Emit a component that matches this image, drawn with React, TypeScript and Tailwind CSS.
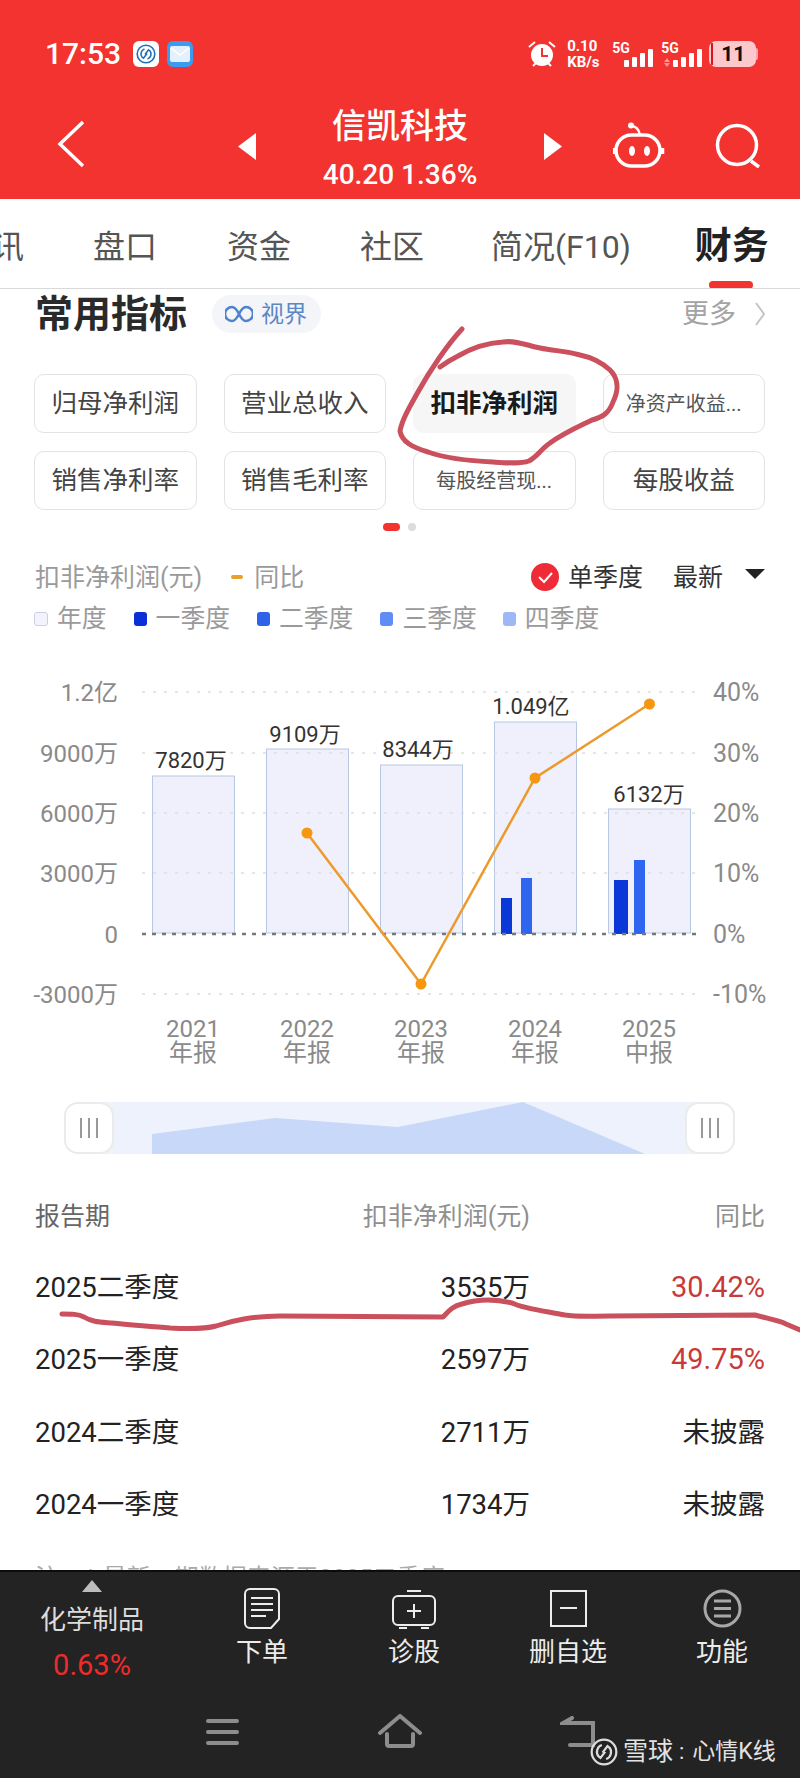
import React from 'react';

const chips = [
  { label: '归母净利润' },
  { label: '营业总收入' },
  { label: '扣非净利润', active: true },
  { label: '净资产收益...', small: true },
  { label: '销售净利率' },
  { label: '销售毛利率' },
  { label: '每股经营现...', small: true },
  { label: '每股收益' },
];

const legend = [
  { label: '一季度', color: 'bg-[#0a2fd6]', cls: 'ml-[27px]' },
  { label: '二季度', color: 'bg-[#2f62e8]', cls: 'ml-[27px]' },
  { label: '三季度', color: 'bg-[#5f8df5]', cls: 'ml-[27px]' },
  { label: '四季度', color: 'bg-[#9db8f5]', cls: 'ml-[26px]' },
];

const rows = [
  { period: '2025二季度', value: '3535万', yoy: '30.42%', up: true },
  { period: '2025一季度', value: '2597万', yoy: '49.75%', up: true },
  { period: '2024二季度', value: '2711万', yoy: '未披露' },
  { period: '2024一季度', value: '1734万', yoy: '未披露' },
];

const grid = [692, 753, 813, 873, 994];
const leftAxis = [
  ['1.2亿', 692],
  ['9000万', 753],
  ['6000万', 813],
  ['3000万', 873],
  ['0', 934],
  ['-3000万', 994],
] as const;
const rightAxis = [
  ['40%', 692],
  ['30%', 753],
  ['20%', 813],
  ['10%', 873],
  ['0%', 934],
  ['-10%', 994],
] as const;
const bars = [
  { x: 152, top: 776, label: '7820万', lx: 191, ly: 760, year: '2021', kind: '年报' },
  { x: 266, top: 749, label: '9109万', lx: 305, ly: 734, year: '2022', kind: '年报' },
  { x: 380, top: 765, label: '8344万', lx: 418, ly: 749, year: '2023', kind: '年报' },
  { x: 494, top: 722, label: '1.049亿', lx: 531, ly: 706, year: '2024', kind: '年报' },
  { x: 608, top: 809, label: '6132万', lx: 649, ly: 794, year: '2025', kind: '中报' },
];
const quarters = [
  { x: 501, w: 11, top: 898, fill: '#0a37d8' },
  { x: 521, w: 11, top: 878, fill: '#2f66f0' },
  { x: 614, w: 14, top: 880, fill: '#0a37d8' },
  { x: 634, w: 11, top: 860, fill: '#2f66f0' },
];
const line = [
  [307, 833],
  [421, 984],
  [535, 778],
  [649.5, 704],
];

const Signal = ({ arrows }: { arrows?: boolean }) => (
  <svg width="40" height="28" viewBox="0 0 40 28" className="fill-white">
    {arrows && <path d="M5 18l3 4H2zM5 27l3-4H2z" className="fill-[#f59a9a]" />}
    <rect x="11" y="20" width="5" height="7" rx="1" />
    <rect x="19" y="17" width="5" height="10" rx="1" />
    <rect x="27" y="13" width="5" height="14" rx="1" />
    <rect x="35" y="9" width="5" height="18" rx="1" />
  </svg>
);

const Xueqiu = ({ cls }: { cls: string }) => (
  <svg width="20" height="20" viewBox="0 0 20 20" fill="none" className={cls}>
    <circle cx="10" cy="10" r="8.800" />
    <path d="M8.500 5C5 6 4 10.500 6 13l1.500 1.200L11 9.500M11.500 15C15 14 16 9.500 14 7l-1.500-1.200L9 10.500" />
  </svg>
);

const StatusBar = () => (
  <div className="flex h-[28px] items-center pl-[45px]">
    <span className="text-[30px] font-medium leading-none text-white">17:53</span>
    <div className="ml-[12px] flex h-[26px] w-[26px] items-center justify-center rounded-[6px] bg-white">
      <Xueqiu cls="stroke-[#1f6fb5] stroke-[1.6]" />
    </div>
    <div className="ml-[8px] flex h-[26px] w-[26px] items-center justify-center rounded-[6px] bg-[#3b9bf0]">
      <svg width="20" height="16" viewBox="0 0 20 16">
        <rect width="20" height="16" rx="2" className="fill-[#e4f1fd]" />
        <path d="M1 2l9 7 9-7" fill="none" className="stroke-white stroke-[1.5]" />
      </svg>
    </div>
    <svg width="28" height="28" viewBox="0 0 28 28" className="ml-[335px]">
      <circle cx="14" cy="15" r="11" className="fill-white" />
      <path d="M14 8v8h6" fill="none" className="stroke-[#f23330] stroke-2" />
      <path d="M1 7l6-5M27 7l-6-5M5 26l3-3M23 26l-3-3" fill="none" className="stroke-white stroke-2" />
    </svg>
    <div className="ml-[11px] flex w-[34px] flex-col text-[15px] font-bold leading-[16px] text-white">
      <span>0.10</span>
      <span>KB/s</span>
    </div>
    <div className="relative ml-[11px] h-[28px] w-[41px]">
      <span className="absolute left-0 top-[1px] text-[14px] font-bold leading-none text-white">5G</span>
      <div className="absolute right-0 top-0"><Signal /></div>
    </div>
    <div className="relative ml-[8px] h-[28px] w-[41px]">
      <span className="absolute left-0 top-[1px] text-[14px] font-bold leading-none text-white">5G</span>
      <div className="absolute right-0 top-0"><Signal arrows /></div>
    </div>
    <div className="ml-[7px] flex h-[26px] w-[47px] items-center rounded-[7px] bg-[#fbc9cd] pl-[2px] text-[21px] font-bold leading-none text-[#111]">
      <span className="h-[22px] w-[2px] bg-[#d8141c]" />
      <span className="ml-[8px]">11</span>
    </div>
    <div className="h-[12px] w-[2px] rounded-r bg-[#f7a7ac]" />
  </div>
);

const NavBar = () => (
  <div className="mt-[32px] flex h-[99px] items-start">
    <svg width="30" height="48" viewBox="0 0 30 48" fill="none" className="ml-[56px] mt-[20px] stroke-white stroke-[3.5]">
      <path d="M27 2L4 24l23 22" />
    </svg>
    <svg width="18" height="27" viewBox="0 0 18 27" className="ml-[152px] mt-[33px] fill-white">
      <path d="M18 0v27L0 13.5z" />
    </svg>
    <div className="flex w-[288px] flex-col items-center text-white">
      <span className="mt-[6px] text-[34px] font-medium leading-[40px]">信凯科技</span>
      <span className="mt-[14px] text-[28px] font-medium leading-[30px]">40.20 1.36%</span>
    </div>
    <svg width="18" height="27" viewBox="0 0 18 27" className="mt-[33px] fill-white">
      <path d="M0 0v27l18-13.500z" />
    </svg>
    <svg width="52" height="48" viewBox="0 0 52 48" fill="none" className="ml-[51px] mt-[22px] stroke-white stroke-[3.500]">
      <rect x="3" y="13" width="44" height="31" rx="15.500" />
      <path d="M1 26v6M49.500 26v6" />
      <path d="M18 4c5 0 8 4 9 9" className="stroke-[2.500]" />
      <circle cx="18" cy="3.500" r="3" className="fill-white stroke-0" />
      <ellipse cx="19" cy="29" rx="3" ry="5" className="fill-white stroke-0" />
      <ellipse cx="34" cy="29" rx="3" ry="5" className="fill-white stroke-0" />
    </svg>
    <svg width="48" height="46" viewBox="0 0 48 46" fill="none" className="ml-[49px] mt-[22px] stroke-white stroke-[3.500]">
      <circle cx="23" cy="23" r="19.500" />
      <path d="M37 39l8 6" />
    </svg>
  </div>
);

const Tabs = () => (
  <div className="relative h-[90px] overflow-hidden border-b border-[#d9d9d9] bg-white">
    <div className="flex h-[89px] items-center whitespace-nowrap pt-[6px] text-[32px] leading-none text-[#555]">
      <span className="ml-[-8px]">讯</span>
      <span className="ml-[69px]">盘口</span>
      <span className="ml-[70px]">资金</span>
      <span className="ml-[69px]">社区</span>
      <span className="ml-[67px]">简况(F10)</span>
      <span className="relative ml-[64px] text-[37px] font-semibold text-[#222]">
        财务
        <span className="absolute left-[14px] top-[53px] h-[8px] w-[44px] rounded-full bg-[#f23330]" />
      </span>
    </div>
  </div>
);

const Chart = () => (
  <svg width="800" height="420" viewBox="0 660 800 420" className="mt-[26px] block">
    {bars.map((b) => (
      <rect key={b.x} x={b.x + 0.5} y={b.top} width="82" height={933 - b.top} className="fill-[#eff0fc] stroke-[#b8c8e2]" />
    ))}
    {grid.map((y) => (
      <line key={y} x1="142" x2="701" y1={y} y2={y} strokeDasharray="3 8" className="stroke-[#dedede] stroke-[1.5]" />
    ))}
    {quarters.map((q) => (
      <rect key={q.x} x={q.x} y={q.top} width={q.w} height={934 - q.top} fill={q.fill} />
    ))}
    <line x1="142" x2="701" y1="934" y2="934" strokeDasharray="4 6" className="stroke-[#777] stroke-[2.5]" />
    {leftAxis.map(([t, y]) => (
      <text key={t} x="118" y={y + 9} textAnchor="end" className="fill-[#8a8a8a] text-[24px]">{t}</text>
    ))}
    {rightAxis.map(([t, y]) => (
      <text key={t} x="713" y={y + 9} className="fill-[#8a8a8a] text-[25px]">{t}</text>
    ))}
    {bars.map((b) => (
      <text key={b.label} x={b.lx} y={b.ly + 8} textAnchor="middle" className="fill-[#333] text-[22px]">{b.label}</text>
    ))}
    {bars.map((b) => (
      <g key={b.year} textAnchor="middle" className="fill-[#8a8a8a] text-[24px]">
        <text x={b.x + 41} y="1037">{b.year}</text>
        <text x={b.x + 41} y="1061">{b.kind}</text>
      </g>
    ))}
    <polyline points={line.map((p) => p.join(',')).join(' ')} fill="none" className="stroke-[#ec9a2c] stroke-[2.5]" />
    {line.map(([x, y]) => (
      <circle key={x} cx={x} cy={y} r="5.500" className="fill-[#f7960f]" />
    ))}
  </svg>
);

const Handle = () => (
  <div className="relative flex h-[52px] w-[50px] items-center justify-center gap-[6px] rounded-[14px] border-2 border-[#ebebeb] bg-white">
    <span className="h-[20px] w-[2px] bg-[#999]" />
    <span className="h-[20px] w-[2px] bg-[#999]" />
    <span className="h-[20px] w-[2px] bg-[#999]" />
  </div>
);

const Slider = () => (
  <div className="relative mx-[64px] mt-[22px] flex h-[52px] w-[671px] justify-between">
    <svg width="671" height="52" viewBox="0 0 671 52" className="absolute inset-0">
      <rect x="20" width="631" height="52" className="fill-[#eef2fd]" />
      <path d="M88 52V32l123-16 123 9L459 0l122 52z" className="fill-[#c8d8f8]" />
    </svg>
    <Handle />
    <Handle />
  </div>
);

const BottomItem = ({ label, cls, children }: { label: string; cls: string; children: React.ReactNode }) => (
  <div className={`flex flex-col items-center ${cls}`}>
    <div className="flex h-[41px] items-center">{children}</div>
    <span className="mt-[3px] text-[26px] leading-[40px] text-[#ececec]">{label}</span>
  </div>
);

const BottomBar = () => (
  <div className="h-[208px] shrink-0 border-t-2 border-[#0c0c0c] bg-[#232323]">
    <div className="flex h-[132px]">
      <div className="flex w-[184px] flex-col items-center pt-[8px]">
        <svg width="20" height="12" viewBox="0 0 20 12" className="fill-[#bdbdbd]">
          <path d="M10 0l10 12H0z" />
        </svg>
        <span className="mt-[12px] text-[26px] leading-[32px] text-[#dcdcdc]">化学制品</span>
        <span className="mt-[13px] text-[29px] leading-[32px] text-[#f02a2a]">0.63%</span>
      </div>
      <div className="flex pt-[16px]">
        <BottomItem label="下单" cls="w-[156px]">
          <svg width="36" height="41" viewBox="0 0 36 41" fill="none" className="stroke-[#ececec] stroke-2">
            <path d="M6 1h24a5 5 0 0 1 5 5v25l-8 9H6a5 5 0 0 1-5-5V6a5 5 0 0 1 5-5z" />
            <path d="M7 10h22M7 16h22M7 22h22M7 28h15" />
          </svg>
        </BottomItem>
        <BottomItem label="诊股" cls="w-[148px]">
          <svg width="44" height="40" viewBox="0 0 44 40" fill="none" className="stroke-[#ececec] stroke-2">
            <path d="M15 2h14" />
            <rect x="1" y="7" width="42" height="29" rx="5" />
            <path d="M7 39h8M29 39h8M22 15v14M15 22h14" />
          </svg>
        </BottomItem>
        <BottomItem label="删自选" cls="w-[160px]">
          <svg width="37" height="37" viewBox="0 0 37 37" fill="none" className="stroke-[#ececec] stroke-2">
            <rect x="1" y="1" width="35" height="35" />
            <path d="M10 18h17" />
          </svg>
        </BottomItem>
        <BottomItem label="功能" cls="w-[148px]">
          <svg width="39" height="39" viewBox="0 0 39 39" fill="none" className="stroke-[#a8a8a8] stroke-[3]">
            <circle cx="19.500" cy="19.500" r="17.500" />
            <path d="M11 12h17M11 19.500h17M11 27h17" />
          </svg>
        </BottomItem>
      </div>
    </div>
    <div className="flex items-start pl-[206px] pt-[10px]">
      <svg width="33" height="28" viewBox="0 0 33 28" fill="none" className="mt-[4px] stroke-[#8d8d8d] stroke-[4]" strokeLinecap="round">
        <path d="M2 3h29M2 14h29M2 25h29" />
      </svg>
      <svg width="44" height="34" viewBox="0 0 44 34" fill="none" className="ml-[139px] stroke-[#8d8d8d] stroke-[4]" strokeLinecap="round">
        <path d="M2 19L22 2l20 17M9 20v10a2 2 0 0 0 2 2h22a2 2 0 0 0 2-2V20" />
      </svg>
      <svg width="38" height="32" viewBox="0 0 38 32" fill="none" className="ml-[138px] mt-[2px] stroke-[#8d8d8d] stroke-[4]" strokeLinecap="round">
        <path d="M12 2L3 7h30v22H10" />
      </svg>
    </div>
  </div>
);

export default function App() {
  return (
    <div className="relative flex h-[1778px] w-[800px] flex-col overflow-hidden bg-white font-[Roboto,'Noto_Sans_CJK_SC',sans-serif]">
      <div className="h-[199px] shrink-0 bg-[#f23330] pt-[40px]">
        <StatusBar />
        <NavBar />
      </div>
      <Tabs />

      <div className="min-h-0 flex-1 overflow-hidden">
        <div className="flex h-[50px] items-center px-[35px]">
          <span className="text-[38px] font-bold leading-none text-[#2a2a2a]">常用指标</span>
          <div className="ml-[25px] flex h-[38px] w-[109px] items-center rounded-full bg-[#f3f5f8] pl-[13px]">
            <svg width="28" height="20" viewBox="0 0 28 20" fill="none" className="stroke-[#4f82cc] stroke-[2.5]">
              <path d="M14 10C11 4 9 3 7 3a7 7 0 0 0 0 14c2 0 4-1 7-7s5-7 7-7a7 7 0 0 1 0 14c-2 0-4-1-7-7z" />
            </svg>
            <span className="ml-[8px] text-[23px] leading-none text-[#5b87c5]">视界</span>
          </div>
          <span className="ml-auto text-[27px] leading-none text-[#a3a3a3]">更多</span>
          <svg width="10" height="24" viewBox="0 0 10 24" fill="none" className="ml-[19px] stroke-[#c4c4c4] stroke-2">
            <path d="M1 1l8 11-8 11" />
          </svg>
        </div>

        <div className="mt-[35px] grid grid-cols-4 gap-x-[27px] gap-y-[18px] pl-[34px] pr-[35px]">
          {chips.map((c) => (
            <div
              key={c.label}
              className={
                c.active
                  ? 'flex h-[59px] items-center justify-center rounded-[10px] bg-[#f6f6f6] text-[25.5px] font-bold text-[#1a1a1a]'
                  : c.small
                    ? 'flex h-[59px] items-center justify-center rounded-[10px] border border-[#e3e3e3] text-[20px] text-[#555]'
                    : 'flex h-[59px] items-center justify-center rounded-[10px] border border-[#e3e3e3] text-[25.5px] text-[#444]'
              }
            >
              {c.label}
            </div>
          ))}
        </div>

        <div className="mt-[13px] flex justify-center gap-[8px] pr-[1px]">
          <span className="h-[8px] w-[17px] rounded-full bg-[#f23330]" />
          <span className="h-[8px] w-[8px] rounded-full bg-[#dcdcdc]" />
        </div>

        <div className="mt-[31px] flex h-[30px] items-center whitespace-nowrap px-[35px] text-[25px] leading-none">
          <span className="text-[#9a9a9a]">扣非净利润(元)</span>
          <span className="ml-[29px] h-[4px] w-[12px] rounded-full bg-[#e8a02e]" />
          <span className="ml-[11px] text-[#9a9a9a]">同比</span>
          <svg width="28" height="28" viewBox="0 0 28 28" className="ml-auto shrink-0">
            <circle cx="14" cy="14" r="14" className="fill-[#ee2b36]" />
            <path d="M8 14l5 5 8-9" fill="none" className="stroke-white stroke-2" />
          </svg>
          <span className="ml-[9px] text-[#333]">单季度</span>
          <span className="ml-[30px] text-[#333]">最新</span>
          <svg width="20" height="10" viewBox="0 0 20 10" className="mb-[6px] ml-[22px] shrink-0 fill-[#222]">
            <path d="M0 0h20L10 10z" />
          </svg>
        </div>

        <div className="mt-[12px] flex h-[30px] items-center whitespace-nowrap px-[34px] text-[24.800px] leading-none text-[#9a9a9a]">
          <span className="h-[14px] w-[14px] rounded-[3px] border border-[#c9cfe6] bg-[#f2f3fd]" />
          <span className="ml-[9px]">年度</span>
          {legend.map((l) => (
            <React.Fragment key={l.label}>
              <span className={`h-[14px] w-[13px] rounded-[3px] ${l.color} ${l.cls}`} />
              <span className="ml-[9px]">{l.label}</span>
            </React.Fragment>
          ))}
        </div>

        <Chart />
        <Slider />

        <div className="mt-[44px] px-[35px]">
          <div className="flex h-[36px] items-center text-[25px] leading-none text-[#8f8f8f]">
            <span className="w-[260px] text-[#666]">报告期</span>
            <span className="w-[235px] text-right">扣非净利润(元)</span>
            <span className="w-[235px] text-right">同比</span>
          </div>
          <div className="mt-[17px]">
            {rows.map((r) => (
              <div key={r.period} className="flex h-[72.6px] items-center text-[27.500px] leading-none text-[#222]">
                <span className="w-[260px]">{r.period}</span>
                <span className="w-[235px] text-right">{r.value}</span>
                <span className={r.up ? 'w-[235px] text-right text-[29px] text-[#c83a3a]' : 'w-[235px] text-right'}>{r.yoy}</span>
              </div>
            ))}
          </div>
          <div className="mt-[22px] whitespace-nowrap text-[24px] leading-[30px] text-[#aaa]">注：1.最新一期数据来源于2025二季度</div>
        </div>
      </div>

      <BottomBar />

      {/* hand-drawn marks on top of the screenshot */}
      <svg width="800" height="1778" viewBox="0 0 800 1778" fill="none" strokeLinecap="round" strokeLinejoin="round" className="absolute inset-0 stroke-[#c9505c] stroke-[5]">
        <path d="M462 329C447 345 429 372 418 392C409 408 402 420 400 431C402 442 412 447 428 452C448 459 470 461 493 462C508 463 520 464 529 461C538 456 541 449 550 443C564 433 578 427 592 420C603 417 609 413 613 402C620 388 617 377 610 370C600 361 590 357 580 355C566 351 555 351 540 348C526 345 515 340 503 342C486 343 470 349 458 356C450 360 444 364 440 367" />
        <path d="M62 1314C72 1314 78 1314 84 1317C92 1322 100 1322 112 1323C130 1325 150 1326 170 1328C190 1329 205 1329 216 1326C225 1323 232 1321 244 1319C256 1317 264 1316 280 1316L443 1317C448 1312 452 1306 462 1304C478 1299 495 1299 512 1303C525 1309 545 1311 565 1315C578 1317 590 1316 610 1316L755 1315C765 1318 778 1320 786 1324L800 1330" />
      </svg>

      <div className="absolute left-[590px] top-[1737px] flex h-[29px] items-center leading-none text-[#e2e2e2]">
        <div className="h-[28px] w-[28px] [&>svg]:h-full [&>svg]:w-full">
          <Xueqiu cls="stroke-[#dcdcdc] stroke-[1.6]" />
        </div>
        <span className="ml-[5px] text-[25px]">雪球</span>
        <span className="ml-[6px] text-[22px]">:</span>
        <span className="ml-[8px] text-[23px]">心情K线</span>
      </div>
    </div>
  );
}
